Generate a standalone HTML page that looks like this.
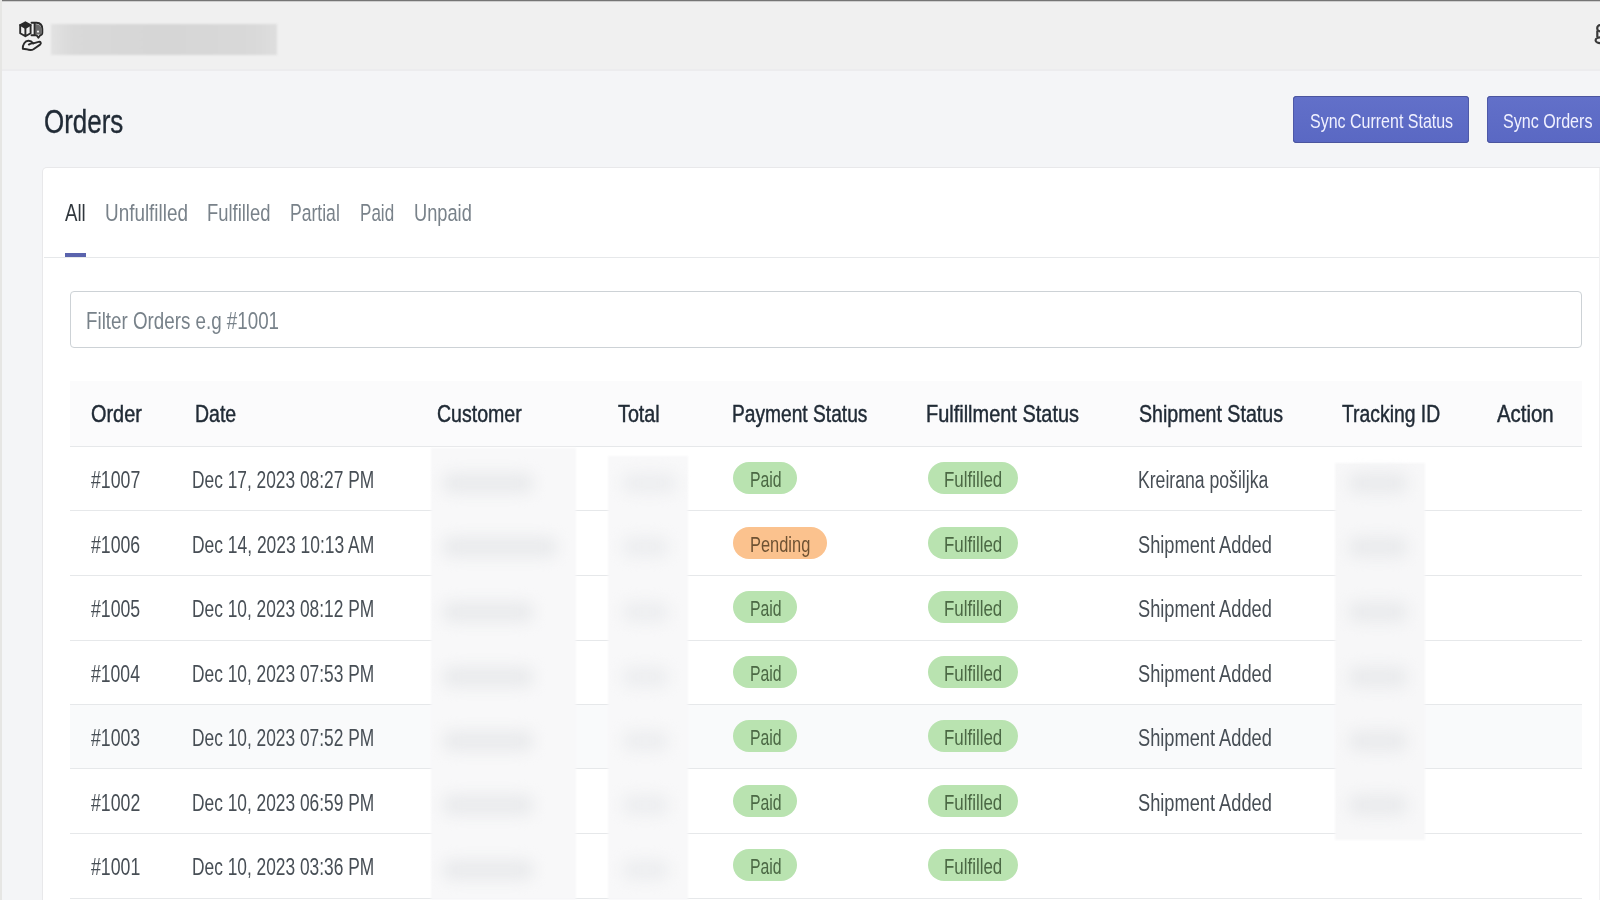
<!DOCTYPE html>
<html><head><meta charset="utf-8"><style>
html,body{margin:0;padding:0}
body{width:1600px;height:900px;overflow:hidden;position:relative;background:#f4f5f7;font-family:"Liberation Sans",sans-serif}
.r{position:absolute}
.t{position:absolute;white-space:pre;line-height:normal;transform-origin:0 0}
</style></head><body>
<div class="r" style="left:0px;top:0px;width:1600px;height:1px;background:#757575"></div>
<div class="r" style="left:0px;top:1px;width:1600px;height:1px;background:#cfcfcf"></div>
<div class="r" style="left:0px;top:2px;width:1600px;height:67px;background:#f0f0f0"></div>
<div class="r" style="left:0px;top:69px;width:1600px;height:2px;background:#ececee"></div>
<div class="r" style="left:0px;top:0px;width:2px;height:900px;background:#e6e6e4"></div>
<svg style="position:absolute;left:14px;top:16px" width="36" height="40" viewBox="14 16 36 40" fill="none" stroke="#2a2a2a" stroke-width="1.9" stroke-linejoin="round" stroke-linecap="round">
<path d="M25.4,22.3 L30.6,25 L25.4,27.8 L20.2,25 Z" fill="#2a2a2a"/>
<path d="M20.2,25 V33.2 L25.4,36.3 L30.6,33.2 V25 M25.4,27.8 V36.3"/>
<path d="M31.5,22.8 H36.5 Q42.3,23.2 42.3,29 V32.8 Q42.3,35 40.2,35.3 L38.4,37.8 L36.6,35.3 H31.5"/>
<path d="M35.2,24 Q41.6,24.2 41.6,29.5 V33.2 Q41.6,34.6 39.6,34.6 H35.2 Z" fill="#6a6a6a" stroke="none"/><circle cx="38" cy="31.6" r="1.1" fill="#f0f0f0" stroke="none"/><path d="M34.6,23.5 V35"/>
<path d="M22.8,48.8 C22.6,44.5 25,41 28.3,40.8 C30.6,40.7 32.3,42.2 33.2,43.4 L38.6,41.8 C40.6,41.3 41.6,43.2 40.1,44.6 L33.5,49.2 C31.5,50.4 29,50.1 26.5,49.2 Z"/>
<path d="M28.8,44.6 Q31,43.2 33.2,43.4"/>
</svg>
<div class="r" style="left:51px;top:24px;width:226px;height:31px;background:linear-gradient(90deg,#e2e2e2,#d9d9d9 10%,#d6d6d6 50%,#d9d9d9 90%,#dedede);filter:blur(0.8px)"></div>
<svg style="position:absolute;left:1585px;top:20px" width="15" height="30" viewBox="1585 20 15 30" fill="none" stroke="#3a3a3a" stroke-width="2.2">
<circle cx="1600.3" cy="28.3" r="3.1"/><path d="M1597.3,30.5 V37"/><ellipse cx="1600.8" cy="40.2" rx="5.2" ry="2.9"/>
</svg>
<div class="t" style="left:44.23px;top:103.40px;font-size:32.70px;color:#212b36;transform:scaleX(0.7935);-webkit-text-stroke:0.35px #212b36;">Orders</div>
<div class="r" style="left:1293px;top:96px;width:176px;height:47px;background:linear-gradient(#6270c9,#5a68c3);border-radius:4px;box-shadow:inset 0 1px 0 #4b559e,inset 0 -1px 0 #4b559e,inset 1px 0 0 #4e59a8,inset -1px 0 0 #4e59a8"></div>
<div class="r" style="left:1487px;top:96px;width:130px;height:47px;background:linear-gradient(#6270c9,#5a68c3);border-radius:4px;box-shadow:inset 0 1px 0 #4b559e,inset 0 -1px 0 #4b559e,inset 1px 0 0 #4e59a8,inset -1px 0 0 #4e59a8"></div>
<div class="t" style="left:1309.58px;top:109.49px;font-size:20.78px;color:#f1f1ff;transform:scaleX(0.7702);">Sync Current Status</div>
<div class="t" style="left:1502.58px;top:109.49px;font-size:20.78px;color:#f1f1ff;transform:scaleX(0.7751);">Sync Orders</div>
<div class="r" style="left:43px;top:168px;width:1600px;height:800px;background:#fff;border-radius:4px;box-shadow:0 0 0 1px #e8e8ea"></div>
<div class="t" style="left:65.00px;top:199.04px;font-size:24.71px;color:#30373d;transform:scaleX(0.7555);">All</div>
<div class="t" style="left:105.18px;top:199.04px;font-size:24.71px;color:#79828a;transform:scaleX(0.7647);">Unfulfilled</div>
<div class="t" style="left:207.33px;top:199.04px;font-size:24.71px;color:#79828a;transform:scaleX(0.7445);">Fulfilled</div>
<div class="t" style="left:290.09px;top:199.04px;font-size:24.71px;color:#79828a;transform:scaleX(0.7109);">Partial</div>
<div class="t" style="left:359.88px;top:199.04px;font-size:24.71px;color:#79828a;transform:scaleX(0.6908);">Paid</div>
<div class="t" style="left:414.23px;top:199.04px;font-size:24.71px;color:#79828a;transform:scaleX(0.7387);">Unpaid</div>
<div class="r" style="left:44px;top:257px;width:1556px;height:1px;background:#e6e8ea"></div>
<div class="r" style="left:65px;top:253px;width:21px;height:4px;background:#5a63ad"></div>
<div class="r" style="left:70px;top:291px;width:1512px;height:57px;background:#fff;border:1px solid #cdd2d6;border-radius:4px;box-sizing:border-box"></div>
<div class="t" style="left:85.80px;top:306.84px;font-size:24.71px;color:#78828a;transform:scaleX(0.7600);">Filter Orders e.g #1001</div>
<div class="r" style="left:70px;top:381px;width:1512px;height:65px;background:#fbfbfc"></div>
<div class="r" style="left:70px;top:446px;width:1512px;height:1px;background:#e6e8ea"></div>
<div class="t" style="left:91.01px;top:400.56px;font-size:23.69px;color:#212b36;transform:scaleX(0.8391);-webkit-text-stroke:0.45px #212b36;">Order</div>
<div class="t" style="left:195.44px;top:400.56px;font-size:23.69px;color:#212b36;transform:scaleX(0.8219);-webkit-text-stroke:0.45px #212b36;">Date</div>
<div class="t" style="left:436.82px;top:400.56px;font-size:23.69px;color:#212b36;transform:scaleX(0.8254);-webkit-text-stroke:0.45px #212b36;">Customer</div>
<div class="t" style="left:618.00px;top:400.56px;font-size:23.69px;color:#212b36;transform:scaleX(0.8338);-webkit-text-stroke:0.45px #212b36;">Total</div>
<div class="t" style="left:732.22px;top:400.56px;font-size:23.69px;color:#212b36;transform:scaleX(0.8098);-webkit-text-stroke:0.45px #212b36;">Payment Status</div>
<div class="t" style="left:926.40px;top:400.56px;font-size:23.69px;color:#212b36;transform:scaleX(0.8422);-webkit-text-stroke:0.45px #212b36;">Fulfillment Status</div>
<div class="t" style="left:1138.62px;top:400.56px;font-size:23.69px;color:#212b36;transform:scaleX(0.8285);-webkit-text-stroke:0.45px #212b36;">Shipment Status</div>
<div class="t" style="left:1342.21px;top:400.56px;font-size:23.69px;color:#212b36;transform:scaleX(0.8164);-webkit-text-stroke:0.45px #212b36;">Tracking ID</div>
<div class="t" style="left:1496.50px;top:400.56px;font-size:23.69px;color:#212b36;transform:scaleX(0.8612);-webkit-text-stroke:0.45px #212b36;">Action</div>
<div class="r" style="left:70px;top:510px;width:1512px;height:1px;background:#e6e8ea"></div>
<div class="t" style="left:90.80px;top:466.30px;font-size:23.98px;color:#474e55;transform:scaleX(0.7394);">#1007</div>
<div class="t" style="left:192.36px;top:466.30px;font-size:23.98px;color:#474e55;transform:scaleX(0.7234);">Dec 17, 2023 08:27 PM</div>
<div class="r" style="left:733px;top:462px;width:64px;height:32px;background:#b9e3b0;border-radius:16px"></div>
<div class="t" style="left:750.04px;top:468.06px;font-size:21.37px;color:#4b6844;transform:scaleX(0.7398);">Paid</div>
<div class="r" style="left:928px;top:462px;width:90px;height:32px;background:#b9e3b0;border-radius:16px"></div>
<div class="t" style="left:943.65px;top:468.06px;font-size:21.37px;color:#4b6844;transform:scaleX(0.7916);">Fulfilled</div>
<div class="t" style="left:1137.59px;top:466.30px;font-size:23.98px;color:#474e55;transform:scaleX(0.7353);">Kreirana pošiljka</div>
<div class="r" style="left:70px;top:575px;width:1512px;height:1px;background:#e6e8ea"></div>
<div class="t" style="left:90.80px;top:530.80px;font-size:23.98px;color:#474e55;transform:scaleX(0.7381);">#1006</div>
<div class="t" style="left:192.35px;top:530.80px;font-size:23.98px;color:#474e55;transform:scaleX(0.7272);">Dec 14, 2023 10:13 AM</div>
<div class="r" style="left:733px;top:527px;width:94px;height:32px;background:#fbc28e;border-radius:16px"></div>
<div class="t" style="left:749.99px;top:532.56px;font-size:21.37px;color:#6e5233;transform:scaleX(0.7690);">Pending</div>
<div class="r" style="left:928px;top:527px;width:90px;height:32px;background:#b9e3b0;border-radius:16px"></div>
<div class="t" style="left:943.65px;top:532.56px;font-size:21.37px;color:#4b6844;transform:scaleX(0.7916);">Fulfilled</div>
<div class="t" style="left:1138.18px;top:530.80px;font-size:23.98px;color:#474e55;transform:scaleX(0.7607);">Shipment Added</div>
<div class="r" style="left:70px;top:640px;width:1512px;height:1px;background:#e6e8ea"></div>
<div class="t" style="left:90.80px;top:595.30px;font-size:23.98px;color:#474e55;transform:scaleX(0.7381);">#1005</div>
<div class="t" style="left:192.36px;top:595.30px;font-size:23.98px;color:#474e55;transform:scaleX(0.7234);">Dec 10, 2023 08:12 PM</div>
<div class="r" style="left:733px;top:591px;width:64px;height:32px;background:#b9e3b0;border-radius:16px"></div>
<div class="t" style="left:750.04px;top:597.06px;font-size:21.37px;color:#4b6844;transform:scaleX(0.7398);">Paid</div>
<div class="r" style="left:928px;top:591px;width:90px;height:32px;background:#b9e3b0;border-radius:16px"></div>
<div class="t" style="left:943.65px;top:597.06px;font-size:21.37px;color:#4b6844;transform:scaleX(0.7916);">Fulfilled</div>
<div class="t" style="left:1138.18px;top:595.30px;font-size:23.98px;color:#474e55;transform:scaleX(0.7607);">Shipment Added</div>
<div class="r" style="left:70px;top:704px;width:1512px;height:1px;background:#e6e8ea"></div>
<div class="t" style="left:90.80px;top:659.80px;font-size:23.98px;color:#474e55;transform:scaleX(0.7340);">#1004</div>
<div class="t" style="left:192.36px;top:659.80px;font-size:23.98px;color:#474e55;transform:scaleX(0.7234);">Dec 10, 2023 07:53 PM</div>
<div class="r" style="left:733px;top:656px;width:64px;height:32px;background:#b9e3b0;border-radius:16px"></div>
<div class="t" style="left:750.04px;top:661.56px;font-size:21.37px;color:#4b6844;transform:scaleX(0.7398);">Paid</div>
<div class="r" style="left:928px;top:656px;width:90px;height:32px;background:#b9e3b0;border-radius:16px"></div>
<div class="t" style="left:943.65px;top:661.56px;font-size:21.37px;color:#4b6844;transform:scaleX(0.7916);">Fulfilled</div>
<div class="t" style="left:1138.18px;top:659.80px;font-size:23.98px;color:#474e55;transform:scaleX(0.7607);">Shipment Added</div>
<div class="r" style="left:70px;top:705px;width:1512px;height:64px;background:#f9fafb"></div>
<div class="r" style="left:70px;top:768px;width:1512px;height:1px;background:#e6e8ea"></div>
<div class="t" style="left:90.80px;top:724.30px;font-size:23.98px;color:#474e55;transform:scaleX(0.7381);">#1003</div>
<div class="t" style="left:192.36px;top:724.30px;font-size:23.98px;color:#474e55;transform:scaleX(0.7234);">Dec 10, 2023 07:52 PM</div>
<div class="r" style="left:733px;top:720px;width:64px;height:32px;background:#b9e3b0;border-radius:16px"></div>
<div class="t" style="left:750.04px;top:726.06px;font-size:21.37px;color:#4b6844;transform:scaleX(0.7398);">Paid</div>
<div class="r" style="left:928px;top:720px;width:90px;height:32px;background:#b9e3b0;border-radius:16px"></div>
<div class="t" style="left:943.65px;top:726.06px;font-size:21.37px;color:#4b6844;transform:scaleX(0.7916);">Fulfilled</div>
<div class="t" style="left:1138.18px;top:724.30px;font-size:23.98px;color:#474e55;transform:scaleX(0.7607);">Shipment Added</div>
<div class="r" style="left:70px;top:833px;width:1512px;height:1px;background:#e6e8ea"></div>
<div class="t" style="left:90.80px;top:788.80px;font-size:23.98px;color:#474e55;transform:scaleX(0.7394);">#1002</div>
<div class="t" style="left:192.36px;top:788.80px;font-size:23.98px;color:#474e55;transform:scaleX(0.7234);">Dec 10, 2023 06:59 PM</div>
<div class="r" style="left:733px;top:785px;width:64px;height:32px;background:#b9e3b0;border-radius:16px"></div>
<div class="t" style="left:750.04px;top:790.56px;font-size:21.37px;color:#4b6844;transform:scaleX(0.7398);">Paid</div>
<div class="r" style="left:928px;top:785px;width:90px;height:32px;background:#b9e3b0;border-radius:16px"></div>
<div class="t" style="left:943.65px;top:790.56px;font-size:21.37px;color:#4b6844;transform:scaleX(0.7916);">Fulfilled</div>
<div class="t" style="left:1138.18px;top:788.80px;font-size:23.98px;color:#474e55;transform:scaleX(0.7607);">Shipment Added</div>
<div class="r" style="left:70px;top:898px;width:1512px;height:1px;background:#e6e8ea"></div>
<div class="t" style="left:90.80px;top:853.30px;font-size:23.98px;color:#474e55;transform:scaleX(0.7394);">#1001</div>
<div class="t" style="left:192.36px;top:853.30px;font-size:23.98px;color:#474e55;transform:scaleX(0.7234);">Dec 10, 2023 03:36 PM</div>
<div class="r" style="left:733px;top:849px;width:64px;height:32px;background:#b9e3b0;border-radius:16px"></div>
<div class="t" style="left:750.04px;top:855.06px;font-size:21.37px;color:#4b6844;transform:scaleX(0.7398);">Paid</div>
<div class="r" style="left:928px;top:849px;width:90px;height:32px;background:#b9e3b0;border-radius:16px"></div>
<div class="t" style="left:943.65px;top:855.06px;font-size:21.37px;color:#4b6844;transform:scaleX(0.7916);">Fulfilled</div>
<div class="r" style="left:1599px;top:168px;width:1px;height:732px;background:#f1f1f2"></div>
<div class="r" style="left:431px;top:448px;width:145px;height:452px;background:#f8f8f9;filter:blur(1px)"></div>
<div class="r" style="left:608px;top:456px;width:80px;height:444px;background:#f8f8f9;filter:blur(1px)"></div>
<div class="r" style="left:1335px;top:463px;width:90px;height:377px;background:#f7f7f8;filter:blur(1px)"></div>
<div class="r" style="left:442px;top:472px;width:92px;height:22px;background:#eaebed;filter:blur(7px);border-radius:11px"></div>
<div class="r" style="left:622px;top:472px;width:55px;height:22px;background:#edeef0;filter:blur(7px);border-radius:11px"></div>
<div class="r" style="left:1348px;top:472px;width:60px;height:22px;background:#eaebed;filter:blur(7px);border-radius:11px"></div>
<div class="r" style="left:442px;top:536px;width:116px;height:22px;background:#eaebed;filter:blur(7px);border-radius:11px"></div>
<div class="r" style="left:622px;top:536px;width:47px;height:22px;background:#edeef0;filter:blur(7px);border-radius:11px"></div>
<div class="r" style="left:1348px;top:536px;width:60px;height:22px;background:#eaebed;filter:blur(7px);border-radius:11px"></div>
<div class="r" style="left:442px;top:601px;width:92px;height:22px;background:#eaebed;filter:blur(7px);border-radius:11px"></div>
<div class="r" style="left:622px;top:601px;width:47px;height:22px;background:#edeef0;filter:blur(7px);border-radius:11px"></div>
<div class="r" style="left:1348px;top:601px;width:60px;height:22px;background:#eaebed;filter:blur(7px);border-radius:11px"></div>
<div class="r" style="left:442px;top:666px;width:92px;height:22px;background:#eaebed;filter:blur(7px);border-radius:11px"></div>
<div class="r" style="left:622px;top:666px;width:47px;height:22px;background:#edeef0;filter:blur(7px);border-radius:11px"></div>
<div class="r" style="left:1348px;top:666px;width:60px;height:22px;background:#eaebed;filter:blur(7px);border-radius:11px"></div>
<div class="r" style="left:442px;top:730px;width:92px;height:22px;background:#eaebed;filter:blur(7px);border-radius:11px"></div>
<div class="r" style="left:622px;top:730px;width:47px;height:22px;background:#edeef0;filter:blur(7px);border-radius:11px"></div>
<div class="r" style="left:1348px;top:730px;width:60px;height:22px;background:#eaebed;filter:blur(7px);border-radius:11px"></div>
<div class="r" style="left:442px;top:794px;width:92px;height:22px;background:#eaebed;filter:blur(7px);border-radius:11px"></div>
<div class="r" style="left:622px;top:794px;width:47px;height:22px;background:#edeef0;filter:blur(7px);border-radius:11px"></div>
<div class="r" style="left:1348px;top:794px;width:60px;height:22px;background:#eaebed;filter:blur(7px);border-radius:11px"></div>
<div class="r" style="left:442px;top:859px;width:92px;height:22px;background:#eaebed;filter:blur(7px);border-radius:11px"></div>
<div class="r" style="left:622px;top:859px;width:47px;height:22px;background:#edeef0;filter:blur(7px);border-radius:11px"></div>
</body></html>
